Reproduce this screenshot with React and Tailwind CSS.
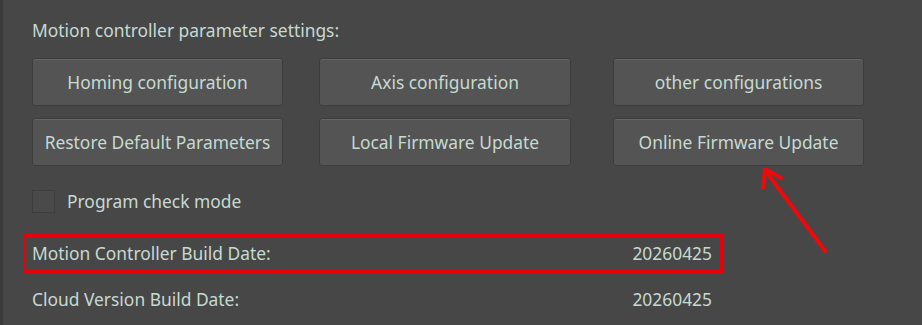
export default function App() {
  const font = { fontFamily: '"Noto Sans", sans-serif' };
  const btn =
    "h-[48px] rounded-[3px] border border-[#3c3c3c] bg-[#545454] shadow-[inset_0_1px_0_#656565] text-[17.4px] text-[#c6dad2] flex items-center justify-center";
  return (
    <div
      className="w-[922px] h-[325px] bg-[#474747] border-l-[3px] border-[#3b3b3b] relative overflow-hidden text-[#c6dad2] text-[17.4px]"
      style={font}
    >
      <div className="pl-[29px] pt-[17px]">
        <div className="h-[26px] flex items-center">Motion controller parameter settings:</div>
        <div className="mt-[15px] flex flex-col gap-[12px]">
          <div className="flex">
            <div className={`${btn} w-[251px]`}>Homing configuration</div>
            <div className={`${btn} w-[252px] ml-[36px]`}>Axis configuration</div>
            <div className={`${btn} w-[251px] ml-[42px]`}>other configurations</div>
          </div>
          <div className="flex">
            <div className={`${btn} w-[251px]`}>Restore Default Parameters</div>
            <div className={`${btn} w-[252px] ml-[36px]`}>Local Firmware Update</div>
            <div className={`${btn} w-[251px] ml-[42px]`}>Online Firmware Update</div>
          </div>
        </div>
        <div className="mt-[24px] flex items-center h-[23px]">
          <div className="w-[23px] h-[23px] border border-[#3d3d3d] bg-[#4a4a4a]" />
          <span className="ml-[12px]">Program check mode</span>
        </div>
      </div>
      <div className="ml-[20px] mt-[21px] w-[700px] h-[39px] border-[3px] border-[#e8000b] flex items-center justify-between pl-[6px] pr-[8px]">
        <span>Motion Controller Build Date:</span>
        <span>20260425</span>
      </div>
      <div className="ml-[29px] w-[680px] mt-[14px] h-[24px] flex items-center justify-between">
        <span>Cloud Version Build Date:</span>
        <span>20260425</span>
      </div>
      <svg className="absolute left-[740px] top-[160px]" width="100" height="100" viewBox="0 0 100 100">
        <line x1="82" y1="91" x2="24" y2="13" stroke="#ee0a0a" strokeWidth="4" strokeLinecap="round" />
        <polyline points="20,28 22,9 38,18" fill="none" stroke="#ee0a0a" strokeWidth="4" strokeLinecap="round" strokeLinejoin="round" />
      </svg>
    </div>
  );
}
